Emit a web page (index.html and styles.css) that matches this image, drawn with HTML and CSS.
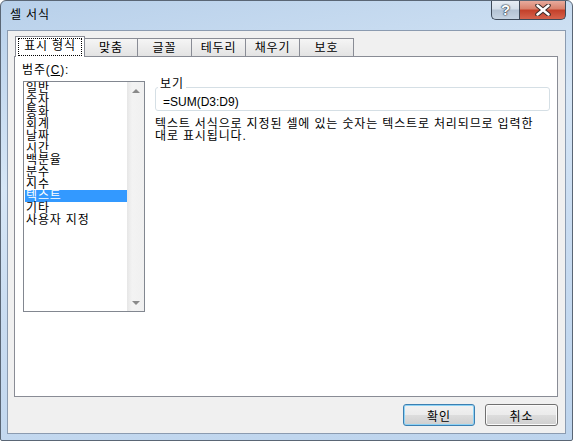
FILE: index.html
```html
<!DOCTYPE html>
<html lang="ko">
<head>
  <meta charset="UTF-8" />
  <meta name="viewport" content="width=device-width, initial-scale=1.0" />
  <title>셀 서식</title>
  <link rel="stylesheet" href="styles.css">
</head>
<body>
  <div class="window">
    <div class="titlebar">
      <span class="title">셀 서식</span>
      <div class="caption-buttons">
        <span class="cap-btn help">?</span>
        <span class="cap-btn close">
          <svg width="16" height="12" viewBox="0 0 16 12">
            <path d="M2.5 1.5 L13.5 10.5 M13.5 1.5 L2.5 10.5" stroke="#3a2a28" stroke-width="4.5" stroke-linecap="round" />
            <path d="M2.5 1.5 L13.5 10.5 M13.5 1.5 L2.5 10.5" stroke="#ffffff" stroke-width="2.5" stroke-linecap="round" />
          </svg>
        </span>
      </div>
    </div>

    <div class="client">
      <div class="tabs">
        <div class="tab active"><span class="focus">표시 형식</span></div>
        <div class="tab first">맞춤</div>
        <div class="tab">글꼴</div>
        <div class="tab">테두리</div>
        <div class="tab">채우기</div>
        <div class="tab">보호</div>
      </div>

      <div class="panel">
        <div class="category">
          <div class="label">범주(<u>C</u>):</div>
          <div class="listbox">
            <ul class="items">
              <li>일반</li>
              <li>숫자</li>
              <li>통화</li>
              <li>회계</li>
              <li>날짜</li>
              <li>시간</li>
              <li>백분율</li>
              <li>분수</li>
              <li>지수</li>
              <li class="selected">텍스트</li>
              <li>기타</li>
              <li>사용자 지정</li>
            </ul>
            <div class="scrollbar">
              <span class="arrow"><span class="tri up"></span></span>
              <span class="arrow"><span class="tri down"></span></span>
            </div>
          </div>
        </div>

        <div class="detail">
          <fieldset class="sample">
            <legend>보기</legend>
            <div class="sample-value">=SUM(D3:D9)</div>
          </fieldset>
          <p class="desc">텍스트 서식으로 지정된 셀에 있는 숫자는 텍스트로 처리되므로 입력한<br>대로 표시됩니다.</p>
        </div>
      </div>

      <div class="footer">
        <button class="btn default">확인</button>
        <button class="btn cancel">취소</button>
      </div>
    </div>
  </div>
</body>
</html>
```

FILE: styles.css
```css
body {
  margin: 0;
  font-family: "Liberation Sans", "Noto Sans CJK KR", sans-serif;
  font-size: 12px;
  letter-spacing: 0.85px;
  color: #000;
  background: #fff;
}

.window {
  width: 573px;
  height: 441px;
  box-sizing: border-box;
  border: 1px solid #5a6675;
  border-radius: 6px 6px 2px 2px;
  background: linear-gradient(170deg, #b8d0ea 0%, #d6e6f6 35%, #c9dcf1 60%, #bdd4ed 100%);
  display: flex;
  flex-direction: column;
  overflow: hidden;
}

/* title bar */
.titlebar {
  height: 29px;
  flex-shrink: 0;
  display: flex;
  justify-content: space-between;
  align-items: flex-start;
  padding: 0 6px 0 9px;
}

.title {
  margin-top: 7px;
  line-height: 14px;
}

.caption-buttons {
  display: flex;
  margin-top: -1px;
}

.cap-btn {
  height: 20px;
  box-sizing: border-box;
  border: 1px solid #3e4a59;
  border-top: 0;
  display: flex;
  align-items: center;
  justify-content: center;
  letter-spacing: 0;
}

.help {
  width: 28px;
  border-right: 0;
  border-radius: 0 0 0 5px;
  background: linear-gradient(#e9eff6 0%, #d6e0eb 45%, #b4c3d4 55%, #c6d4e3 100%);
  color: #fff;
  font-weight: bold;
  font-size: 15px;
  line-height: 18px;
  text-shadow: 0 0 1px #26313e, 0 0 1px #26313e, 0 0 2px #26313e;
}

.close {
  width: 47px;
  border-radius: 0 0 5px 0;
  background: linear-gradient(#eab0a3 0%, #da836e 45%, #c4412b 55%, #d6634d 100%);
}

/* client area */
.client {
  flex: 1;
  margin: 0 6px 6px 6px;
  border: 1px solid #8b9bb0;
  background: #f0f0f0;
  display: flex;
  flex-direction: column;
  padding-top: 5px;
}

.tabs {
  display: flex;
  align-items: flex-end;
  height: 21px;
  padding-left: 7px;
  margin-bottom: -1px;
}

.tab {
  box-sizing: border-box;
  width: 55px;
  height: 18px;
  margin-bottom: 1px;
  margin-left: -1px;
  border: 1px solid #898c95;
  border-bottom: 0;
  background: linear-gradient(#f5f5f5, #e3e3e3);
  text-align: center;
  line-height: 18px;
}

.tab.first {
  width: 54px;
}

.tab.active {
  position: relative;
  z-index: 1;
  width: 70px;
  height: 21px;
  margin: 0;
  background: #fff;
}

.focus {
  display: block;
  height: 18px;
  box-sizing: border-box;
  margin: 1px 2px 0;
  border: 1px dotted #000;
  line-height: 15px;
}

.panel {
  height: 341px;
  box-sizing: border-box;
  margin: 0 7px 0 6px;
  border: 1px solid #898c95;
  background: #fff;
  display: flex;
}

.category {
  padding-left: 7px;
}

.label {
  margin-top: 6px;
  line-height: 14px;
}

.listbox {
  margin: 4px 0 0 1px;
  width: 122px;
  height: 231px;
  box-sizing: border-box;
  border: 1px solid #828790;
  display: flex;
}

.items {
  flex: 1;
  list-style: none;
  margin: 0;
  padding: 0;
}

.items li {
  margin-left: 1px;
  padding-left: 1px;
  line-height: 12px;
  height: 12px;
  white-space: nowrap;
}

.items li.selected {
  background: #3399ff;
  color: #fff;
}

.scrollbar {
  width: 17px;
  background: linear-gradient(to right, #e6e6e6, #f3f3f3 30%, #f0f0f0);
  display: flex;
  flex-direction: column;
  justify-content: space-between;
}

.arrow {
  height: 17px;
  display: flex;
  align-items: center;
  justify-content: center;
}

.tri {
  width: 0;
  height: 0;
  border-left: 4px solid transparent;
  border-right: 4px solid transparent;
}

.tri.up {
  border-bottom: 4px solid #8a8a8a;
}

.tri.down {
  border-top: 4px solid #8a8a8a;
}

.detail {
  flex: 1;
  margin: 0 7px 0 10px;
}

.sample {
  margin: 21px 0 0;
  padding: 0 7px 1px;
  min-width: 0;
  border: 1px solid #d5dfe5;
  border-radius: 3px;
}

.sample legend {
  margin-left: -5px;
  padding: 0 2px 6px;
  line-height: 12px;
}

.sample-value {
  line-height: 13px;
  letter-spacing: 0;
}

.desc {
  margin: 7px 0 0;
  line-height: 12px;
  white-space: nowrap;
}

.footer {
  display: flex;
  justify-content: flex-end;
  gap: 10px;
  margin: 7px 7px 0 0;
}

.btn {
  width: 73px;
  height: 22px;
  padding: 0;
  font: inherit;
  letter-spacing: 0.85px;
  color: #000;
  border: 1px solid #707070;
  border-radius: 3px;
  background: linear-gradient(#f2f2f2 0%, #ebebeb 50%, #dddddd 50%, #cfcfcf 100%);
  box-shadow: inset 0 0 0 1px #fbfbfb;
}

.btn.default {
  width: 72px;
  border-color: #3c7fb1;
  box-shadow: inset 0 0 0 1px #8fd3f5;
}
```
